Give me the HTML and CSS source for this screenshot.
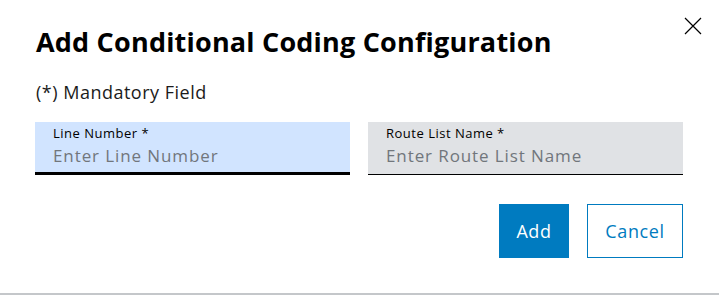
FILE: index.html
```html
<!DOCTYPE html>
<html lang="en">
<head>
<meta charset="utf-8">
<title>Add Conditional Coding Configuration</title>
<link rel="stylesheet" href="styles.css">
</head>
<body>
<div class="dialog">
  <div class="dialog-header">
    <h1 class="dialog-title">Add Conditional Coding Configuration</h1>
    <button class="close-btn" type="button" aria-label="Close">
      <svg width="18" height="18" viewBox="0 0 18 18"><path d="M1 1 L17 17 M17 1 L1 17" stroke="#000" stroke-width="1.2" fill="none"/></svg>
    </button>
  </div>
  <p class="mandatory">(*) Mandatory Field</p>
  <div class="fields">
    <label class="field field-focused">
      <span class="field-label">Line Number *</span>
      <span class="field-input">Enter Line Number</span>
    </label>
    <label class="field">
      <span class="field-label">Route List Name *</span>
      <span class="field-input">Enter Route List Name</span>
    </label>
  </div>
  <div class="actions">
    <button class="btn btn-primary" type="button">Add</button>
    <button class="btn btn-secondary" type="button">Cancel</button>
  </div>
</div>
</body>
</html>
```
FILE: styles.css
```css
* { box-sizing: border-box; }
html, body { margin: 0; padding: 0; background: #fff; }
body { font-family: "Open Sans", "Noto Sans", sans-serif; color: #000; }
.dialog {
  width: 719px;
  height: 295px;
  padding: 17px 36px 0 36px;
  border-bottom: 2px solid #c4c7ca;
  display: flex;
  flex-direction: column;
}
.dialog-header {
  display: flex;
  justify-content: space-between;
  align-items: flex-start;
  margin-right: -19px;
}
.dialog-title {
  margin: 7px 0 0 0;
  font-size: 27px;
  line-height: 36px;
  font-weight: 700;
  letter-spacing: 0.2px;
}
.close-btn {
  border: 0;
  background: none;
  padding: 0;
  width: 18px;
  height: 18px;
  cursor: pointer;
}
.close-btn svg { display: block; }
.mandatory {
  margin: 20px 0 0 0;
  font-size: 18px;
  line-height: 24px;
  letter-spacing: 0.5px;
  color: #1b1b1b;
}
.fields {
  margin: 18px 0 0 -1px;
  display: flex;
  gap: 18px;
}
.field {
  width: 315px;
  height: 53px;
  background: #e0e2e5;
  border-bottom: 1px solid #000;
  padding: 3px 17px 0 18px;
  display: flex;
  flex-direction: column;
}
.field-focused {
  background: #d1e4ff;
  border-bottom: 3px solid #000;
}
.field-label {
  font-size: 13px;
  line-height: 16px;
  letter-spacing: 0.5px;
  color: #000;
}
.field-input {
  margin-top: 3px;
  font-size: 17px;
  line-height: 24px;
  letter-spacing: 0.9px;
  color: #71767c;
}
.actions {
  margin: 29px 0 0 0;
  display: flex;
  justify-content: flex-end;
  gap: 18px;
}
.btn {
  height: 54px;
  font-family: inherit;
  font-size: 18px;
  letter-spacing: 0.6px;
  padding: 0;
  border: 1px solid #007bc0;
  cursor: pointer;
}
.btn-primary { background: #007bc0; color: #fff; width: 70px; }
.btn-secondary { background: #fff; color: #007bc0; width: 96px; }
```
